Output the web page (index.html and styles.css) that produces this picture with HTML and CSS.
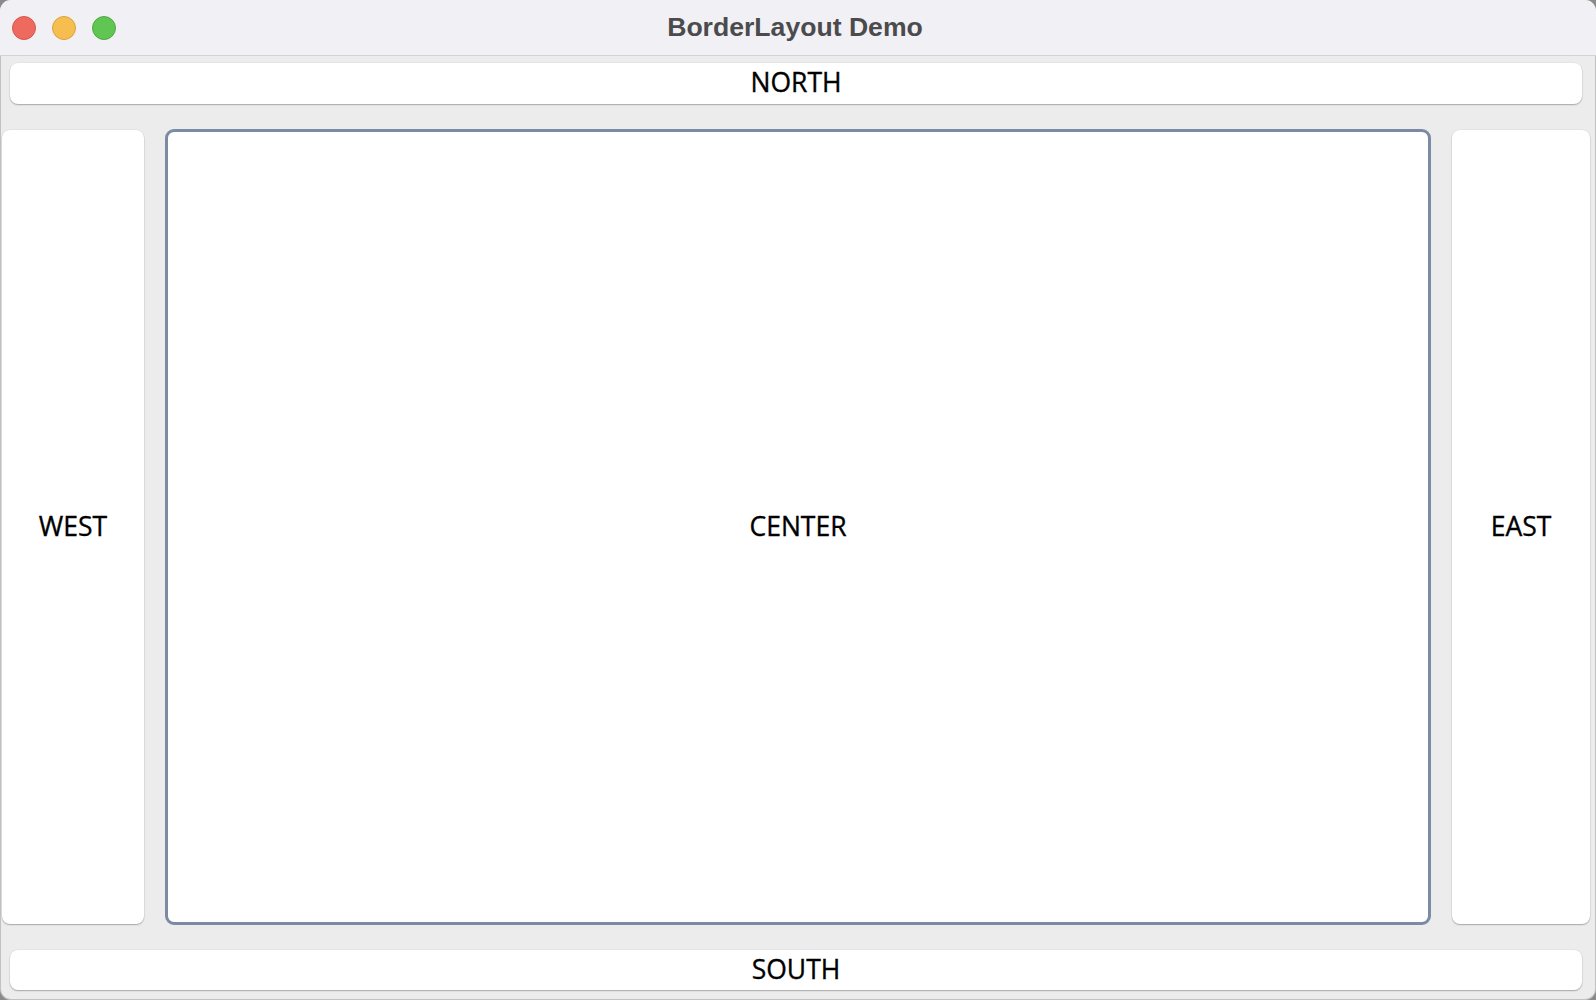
FILE: index.html
```html
<!DOCTYPE html>
<html>
<head>
<meta charset="utf-8">
<title>BorderLayout Demo</title>
<link rel="stylesheet" href="styles.css">
</head>
<body>
<div class="window">
  <div class="titlebar">
    <div class="lights">
      <span class="light red"></span>
      <span class="light yellow"></span>
      <span class="light green"></span>
    </div>
    <div class="title">BorderLayout Demo</div>
  </div>
  <div class="content">
    <div class="panel north">NORTH</div>
    <div class="middle">
      <div class="panel west">WEST</div>
      <div class="panel center">CENTER</div>
      <div class="panel east">EAST</div>
    </div>
    <div class="panel south">SOUTH</div>
  </div>
</div>
</body>
</html>
```
FILE: styles.css
```css
html, body {
  margin: 0;
  padding: 0;
  width: 1596px;
  height: 1000px;
  overflow: hidden;
  background: #8a8a8a;
}
.window {
  width: 1596px;
  height: 1000px;
  box-sizing: border-box;
  border-radius: 11px;
  overflow: hidden;
  background: #ececec;
  display: flex;
  flex-direction: column;
  box-shadow: inset 0 0 0 1px rgba(0,0,0,0.18);
}
.titlebar {
  height: 55px;
  flex: none;
  background: #f1f1f5;
  border-bottom: 1px solid #d3d3d6;
  display: flex;
  align-items: center;
  justify-content: center;
  position: relative;
}
.lights {
  position: absolute;
  left: 12px;
  top: 16px;
  display: flex;
  gap: 16px;
}
.light {
  width: 22px;
  height: 22px;
  border-radius: 50%;
  border: 1px solid;
  display: block;
}
.red { background: #ee6a5f; border-color: #d5574d; }
.yellow { background: #f5be4f; border-color: #d9a33c; }
.green { background: #61c554; border-color: #4fab43; }
.title {
  font-family: "Liberation Sans", Arial, sans-serif;
  font-weight: bold;
  font-size: 26.6px;
  color: #4b4b4d;
  margin-left: -6px;
}
.content {
  flex: 1;
  display: flex;
  flex-direction: column;
  padding: 7px 0 10px 0;
  gap: 26px;
}
.panel {
  background: #ffffff;
  border-radius: 8px;
  box-shadow: 0 1px 1.5px rgba(0,0,0,0.28), 0 0 0 0.5px rgba(0,0,0,0.06);
  display: flex;
  align-items: center;
  justify-content: center;
  padding-bottom: 3px;
  font-family: "Open Sans", "DejaVu Sans", sans-serif;
  font-size: 26.5px;
  -webkit-text-stroke: 0.35px #000;
  color: #000;
  box-sizing: border-box;
}
.north {
  height: 41px;
  margin: 0 14px 0 10px;
  flex: none;
}
.south {
  height: 40px;
  margin: 0 14px 0 10px;
  flex: none;
}
.middle {
  flex: 1;
  display: grid;
  grid-template-columns: 142px 1fr 138px;
  gap: 21px;
  padding: 0 6px 0 2px;
}
.center {
  margin: -1px 0;
  border: 3px solid #7a8ba3;
  box-shadow: none;
  border-radius: 9px;
}
```
